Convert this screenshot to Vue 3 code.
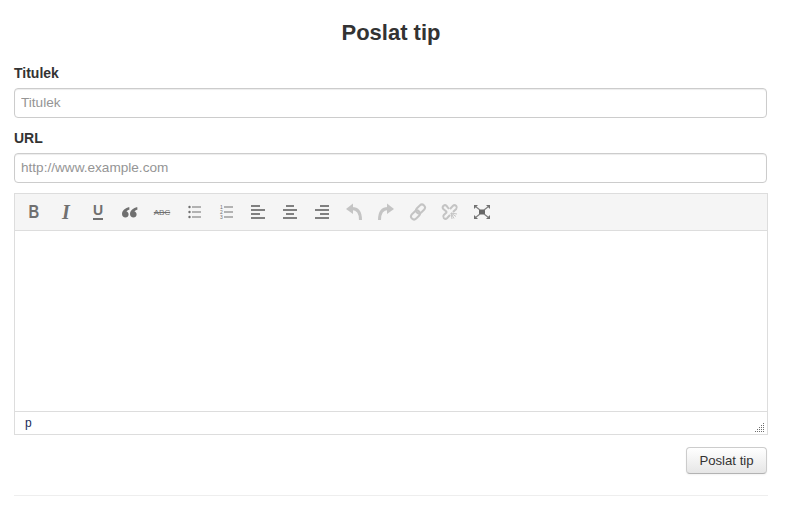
<template>
  <div class="page">
    <h1 class="title">Poslat tip</h1>
    <form class="tip-form" @submit.prevent>
      <label class="label" for="tip-title">Titulek</label>
      <input id="tip-title" v-model="title" class="input" type="text" placeholder="Titulek">
      <label class="label" for="tip-url">URL</label>
      <input id="tip-url" v-model="url" class="input" type="text" placeholder="http://www.example.com">

      <div class="editor">
        <div class="toolbar">
          <button type="button" class="tool"><span class="glyph-b">B</span></button>
          <button type="button" class="tool"><span class="glyph-i">I</span></button>
          <button type="button" class="tool"><span class="glyph-u">U</span></button>
          <button type="button" class="tool">
            <svg width="16" height="16" viewBox="0 0 16 16"><path fill="#707070" d="M7.200 3C3.500 4 0 6.200 0 10c0 2.200 1.500 3.500 3.400 3.500 1.800 0 3.200-1.300 3.200-3 0-1.500-1-2.600-2.100-2.900C4.800 6.700 5.800 6 7.500 5.400zM15.200 3C11.500 4 8 6.200 8 10c0 2.200 1.500 3.500 3.400 3.500 1.800 0 3.200-1.300 3.200-3 0-1.500-1-2.600-2.100-2.900.3-.9 1.300-1.600 3-2.200z"/></svg>
          </button>
          <button type="button" class="tool"><span class="glyph-abc">ABC</span></button>
          <button type="button" class="tool">
            <svg width="16" height="16" viewBox="0 0 16 16" fill="#707070"><circle cx="3.500" cy="3" r="1.200"/><circle cx="3.500" cy="8" r="1.200"/><circle cx="3.500" cy="13" r="1.200"/><path d="M6 2.500h9v1H6zM6 7.500h9v1H6zM6 12.500h9v1H6z"/></svg>
          </button>
          <button type="button" class="tool">
            <svg width="16" height="16" viewBox="0 0 16 16"><g fill="#707070" font-family="Liberation Sans, sans-serif" font-size="5"><text x="2" y="5">1</text><text x="2" y="10">2</text><text x="2" y="15">3</text></g><path d="M6 2.500h9v1H6zM6 7.500h9v1H6zM6 12.500h9v1H6z" fill="#707070"/></svg>
          </button>
          <button v-for="a in aligns" :key="a" type="button" class="tool">
            <svg width="16" height="16" viewBox="0 0 16 16" fill="#808080"><path :d="a"/></svg>
          </button>
          <button type="button" class="tool">
            <svg width="18" height="18" viewBox="0 0 18 18"><path fill="#c4c4c4" d="M8 .500 1 6l7 5z"/><path fill="none" stroke="#c4c4c4" stroke-width="3" d="M7 5.500c5 0 8.500 3.500 8.500 11.500"/></svg>
          </button>
          <button type="button" class="tool">
            <svg width="18" height="18" viewBox="0 0 18 18"><path fill="#c4c4c4" d="M10 .500 17 6l-7 5z"/><path fill="none" stroke="#c4c4c4" stroke-width="3" d="M11 5.500C6 5.500 2.500 9 2.500 17"/></svg>
          </button>
          <button type="button" class="tool">
            <svg width="18" height="18" viewBox="0 0 18 18" fill="none" stroke="#c4c4c4" stroke-width="2"><rect x="1.500" y="9" width="10" height="6" rx="3" transform="rotate(-45 6.500 12)"/><rect x="6.500" y="3" width="10" height="6" rx="3" transform="rotate(-45 11.500 6)"/></svg>
          </button>
          <button type="button" class="tool">
            <svg width="18" height="18" viewBox="0 0 18 18" fill="none" stroke="#c4c4c4" stroke-width="2"><path d="M8 6 5.500 2.800a2.300 2.300 0 0 0-3 0l-.2.200a2.300 2.300 0 0 0 0 3L6 9"/><path d="M9 6l3-3.200a2.300 2.300 0 0 1 3 0l.2.200a2.300 2.300 0 0 1 0 3L12 9"/><path d="M9 12l-3 3.200a2.300 2.300 0 0 1-3 0l-.2-.2a2.300 2.300 0 0 1 0-3L6 9"/><path stroke-width="1" d="M10 10l6 1M10 10l5 3.500M10 10l3 5.500M10 10l1 6"/></svg>
          </button>
          <button type="button" class="tool">
            <svg width="18" height="18" viewBox="0 0 18 18" fill="#707070"><path fill="#666" d="M6 6.500h6v5H6z"/><path d="M1 2h4L1 6zM17 2h-4l4 4zM1 16h4l-4-4zM17 16h-4l4-4z"/><path fill="none" stroke="#808080" stroke-width="1.200" d="M2.500 3.500 7 7M15.500 3.500 11 7M2.500 14.500 7 11M15.500 14.500 11 11"/></svg>
          </button>
        </div>
        <div class="edit-area"></div>
        <div class="statusbar">
          <span class="path">p</span>
          <svg class="grip" width="10" height="10" viewBox="0 0 10 10" fill="#6f6f6f"><path d="M8 0h1v1H8zM6 2h1v1H6zM8 2h1v1H8zM4 4h1v1H4zM6 4h1v1H6zM8 4h1v1H8zM2 6h1v1H2zM4 6h1v1H4zM6 6h1v1H6zM8 6h1v1H8zM0 8h1v1H0zM2 8h1v1H2zM4 8h1v1H4zM6 8h1v1H6zM8 8h1v1H8z"/></svg>
        </div>
      </div>

      <div class="actions">
        <button type="submit" class="submit">Poslat tip</button>
      </div>
    </form>
    <hr class="rule">
  </div>
</template>

<script setup>
import { ref } from 'vue'

const title = ref('')
const url = ref('')

// left, center, right
const aligns = [
  'M1 1h9v2H1zM1 5h14v2H1zM1 9h9v2H1zM1 13h14v2H1z',
  'M4 1h8v2H4zM1 5h14v2H1zM4 9h8v2H4zM1 13h14v2H1z',
  'M6 1h9v2H6zM1 5h14v2H1zM6 9h9v2H6zM1 13h14v2H1z'
]
</script>

<style>
html, body {
  background: #fff;
}
</style>

<style scoped>
.page {
  width: 754px;
  margin-left: 14px;
  font-family: "Liberation Sans", Arial, sans-serif;
  color: #333;
}

.title {
  margin: 0;
  padding-top: 20px;
  font-size: 22px;
  line-height: 26px;
  font-weight: bold;
  text-align: center;
}

.tip-form {
  display: flex;
  flex-direction: column;
  padding-top: 17px;
}

.label {
  font-size: 14px;
  font-weight: bold;
  line-height: 20px;
  margin-bottom: 5px;
}

.input {
  box-sizing: border-box;
  width: 753px;
  height: 30px;
  padding: 0 6px 2px;
  margin-bottom: 10px;
  border: 1px solid #ccc;
  border-radius: 4px;
  box-shadow: inset 0 1px 1px rgba(0, 0, 0, 0.075);
  font-family: inherit;
  font-size: 13.6px;
  color: #555;
  outline: none;
}

.input::placeholder {
  color: #959595;
}

.editor {
  box-sizing: border-box;
  width: 754px;
  height: 242px;
  display: flex;
  flex-direction: column;
  border: 1px solid #ddd;
}

.toolbar {
  display: flex;
  align-items: center;
  height: 36px;
  padding-left: 3px;
  background: #f5f5f5;
  border-bottom: 1px solid #ddd;
}

.tool {
  width: 32px;
  height: 36px;
  padding: 0;
  display: flex;
  align-items: center;
  justify-content: center;
  border: none;
  background: none;
  color: #707070;
  font-family: "Liberation Sans", Arial, sans-serif;
}

.glyph-b {
  display: inline-block;
  font-size: 19px;
  font-weight: bold;
  transform: scaleX(0.78);
}

.glyph-i {
  font-family: "Liberation Serif", serif;
  font-size: 20px;
  font-style: italic;
  font-weight: bold;
}

.glyph-u {
  font-size: 14px;
  font-weight: bold;
  line-height: 13px;
  padding-bottom: 1px;
  border-bottom: 2px solid #707070;
}

.glyph-abc {
  font-size: 8px;
  text-decoration: line-through;
}

.edit-area {
  flex: 1;
  background: #fff;
}

.statusbar {
  height: 22px;
  display: flex;
  align-items: center;
  justify-content: space-between;
  padding: 0 2px 0 10px;
  border-top: 1px solid #ddd;
}

.path {
  font-size: 12px;
  color: #1a2a5a;
}

.grip {
  align-self: flex-end;
  margin-bottom: 1px;
}

.actions {
  display: flex;
  justify-content: flex-end;
  width: 753px;
  padding-top: 12px;
}

.submit {
  width: 81px;
  height: 27px;
  padding: 0 0 1px;
  border: 1px solid #ccc;
  border-bottom-color: #b3b3b3;
  border-radius: 4px;
  background: linear-gradient(to bottom, #fff, #e6e6e6);
  box-shadow: 0 1px 2px rgba(0, 0, 0, 0.05);
  font-family: inherit;
  font-size: 13.2px;
  color: #333;
}

.rule {
  margin: 21px 0 0;
  border: none;
  border-top: 1px solid #eee;
}
</style>
